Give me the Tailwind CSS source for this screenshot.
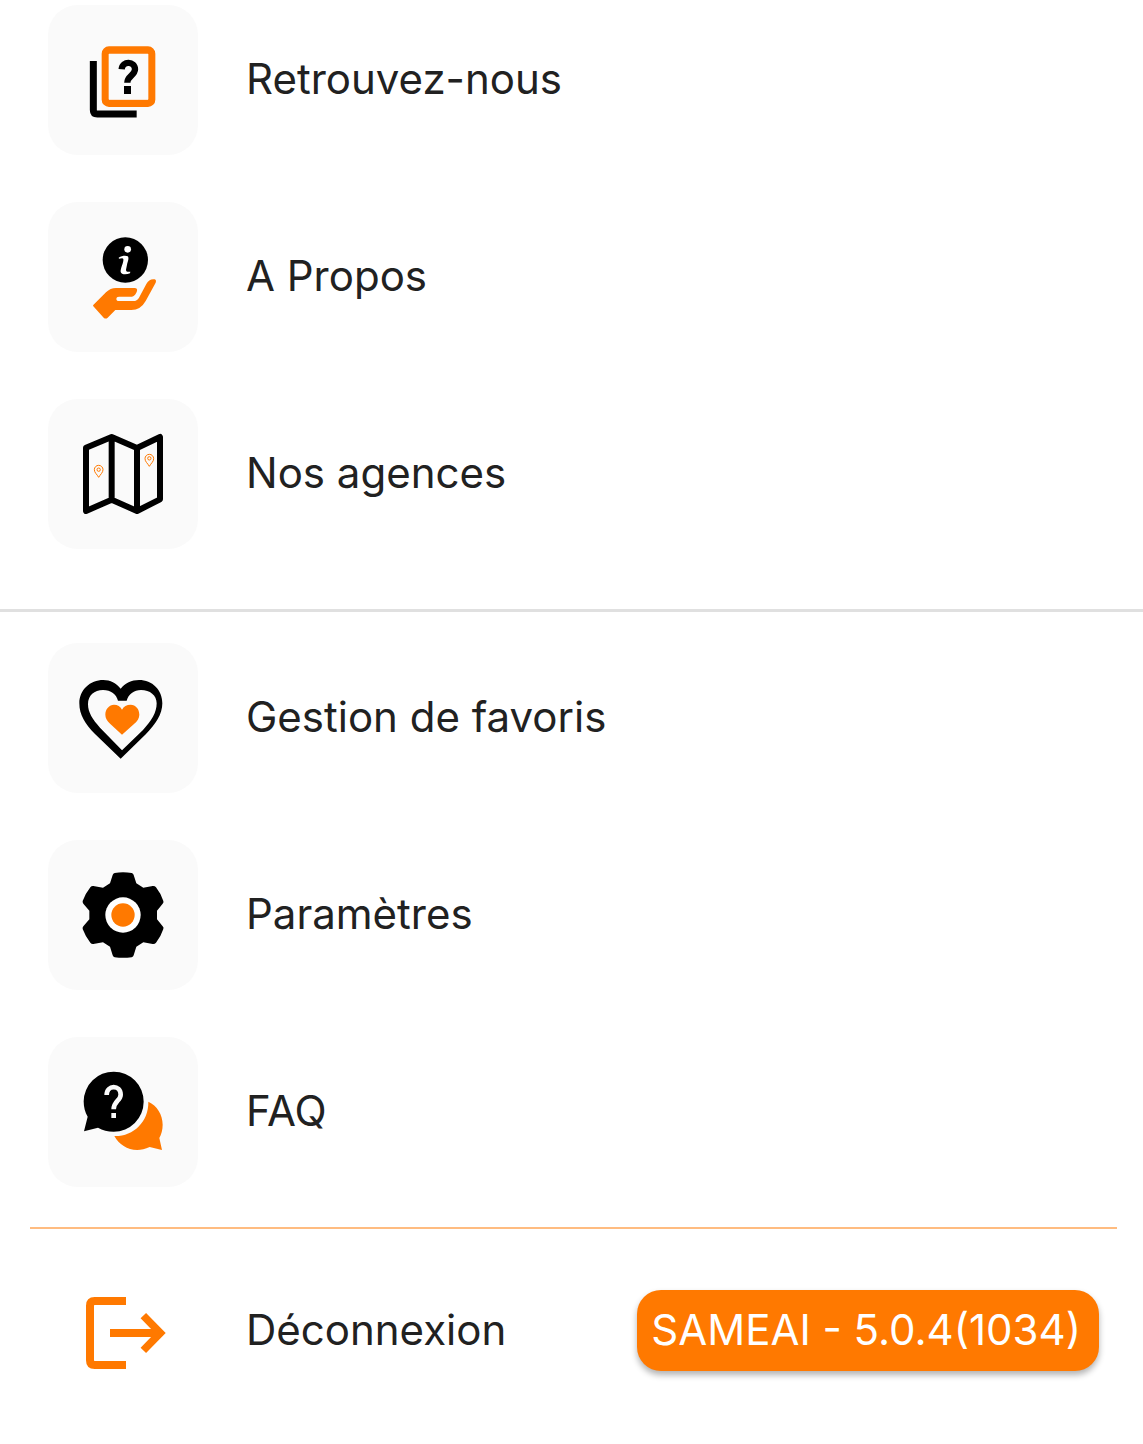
<!DOCTYPE html>
<html lang="fr">
<head>
<meta charset="utf-8">
<meta name="viewport" content="width=device-width, initial-scale=1">
<title>Menu</title>
<script src="https://cdn.jsdelivr.net/npm/@tailwindcss/browser@4"></script>
</head>
<body class="min-h-screen bg-white font-['Inter',sans-serif] text-[42px] leading-[50px] text-[#212121]">
<nav aria-label="Menu">
  <ul class="flex flex-col gap-[47px] pt-[5px] pb-[60px] pl-12">
    <li>
      <a href="#retrouvez-nous" class="flex items-center gap-12">
        <svg class="size-[150px] shrink-0 rounded-[30px] bg-[#fafafa]" viewBox="24 15 450 450" fill="none" aria-hidden="true">
          <path d="M160 183V330Q160 342 172 342H290" stroke="#000" stroke-width="21"/>
          <rect x="196" y="150" width="139" height="160" rx="11" stroke="#ff7900" stroke-width="22"/>
          <rect x="206" y="162" width="119" height="136" fill="#fafafa"/>
          <path d="M245 208C247 181 285 183 285 208C285 226 262 228 262 248" stroke="#000" stroke-width="19"/>
          <path d="M252 258h21v24h-21z" fill="#000"/>
        </svg>
        <span class="pb-0.5">Retrouvez-nous</span>
      </a>
    </li>
    <li>
      <a href="#a-propos" class="flex items-center gap-12">
        <svg class="size-[150px] shrink-0 rounded-[30px] bg-[#fafafa]" viewBox="24 21 450 450" fill="none" aria-hidden="true">
          <circle cx="256" cy="195" r="68" fill="#000"/>
          <circle cx="263" cy="163" r="10" fill="#fff"/>
          <path d="M236 188C246 182 257 181 263 184C268 188 264 199 261 209L258 224C258 231 264 231 271 230L270 235C260 239 244 240 242 231C240 222 252 201 250 192C249 188 243 190 237 191Z" fill="#fff"/>
          <path d="M159 331L198 292Q211 279 228 279H284Q293 279 291 288Q287 302 276 305H237Q229 305 229 311Q229 318 237 318H280Q291 318 297 308L319 267Q327 251 344 253Q350 255 347 263L317 318Q302 345 274 345H226L203 368Q197 373 191 368L160 334Z" fill="#ff7900"/>
        </svg>
        <span class="pb-0.5">A Propos</span>
      </a>
    </li>
    <li>
      <a href="#nos-agences" class="flex items-center gap-12">
        <svg class="size-[150px] shrink-0 rounded-[30px] bg-[#fafafa]" viewBox="24 21 450 450" fill="none" aria-hidden="true">
          <path d="M138 167L215 135L291 168L360 135V322L291 357L215 323L138 357ZM215 135V323M291 168V357" stroke="#000" stroke-width="18" stroke-linejoin="round"/>
          <g stroke="#ff7900" stroke-width="3">
            <path d="M176 256C171 247 163 242 163 233A13 13 0 0 1 189 233C189 242 181 247 176 256Z"/>
            <circle cx="176" cy="233" r="5"/>
            <path d="M328 223C323 214 315 209 315 200A13 13 0 0 1 341 200C341 209 333 214 328 223Z"/>
            <circle cx="328" cy="199" r="5"/>
          </g>
        </svg>
        <span class="pb-0.5">Nos agences</span>
      </a>
    </li>
  </ul>
  <hr class="border-t-[3px] border-[#e0e0e0]">
  <ul class="flex flex-col gap-[47px] pt-[31px] pb-10 pl-12">
    <li>
      <a href="#favoris" class="flex items-center gap-12">
        <svg class="size-[150px] shrink-0 rounded-[30px] bg-[#fafafa]" viewBox="24 24 450 450" fill="none" aria-hidden="true">
          <path fill-rule="evenodd" d="M242 371L165 297C135 267 118 239 118 205C118 165 150 135 190 135C211 135 229 144 242 161C255 144 275 135 297 135C337 135 367 165 367 205C367 238 347 268 318 297ZM246 346L309 285C334 258 350 233 350 205C350 181 330 165 303 165C282 165 265 178 260 197H234C229 178 213 165 189 165C163 165 144 181 144 207C144 233 158 253 180 278Z" fill="#000"/>
          <path d="M246 299L211 267C201 257 196 250 196 239C196 222 208 209 222 209C233 209 241 214 246 224C251 214 260 209 272 209C287 209 298 222 298 239C298 250 292 258 282 267Z" fill="#ff7900"/>
        </svg>
        <span class="pb-0.5">Gestion de favoris</span>
      </a>
    </li>
    <li>
      <a href="#parametres" class="flex items-center gap-12">
        <svg class="size-[150px] shrink-0 rounded-[30px] bg-[#fafafa]" viewBox="24 24 450 450" fill="none" aria-hidden="true">
          <path d="M224 123Q249 119 275 123Q280 124 281 129L289 154L310 167L338 162Q344 161 348 166Q363 185 370 207Q372 211 368 215L351 236V262L368 283Q372 287 370 291Q363 313 348 332Q344 337 338 336L310 331L289 344L281 370Q280 375 275 376Q249 379 224 376Q219 375 218 370L210 344L189 331L160 336Q155 337 151 332Q136 313 128 291Q127 287 130 283L148 262V236L130 215Q127 211 128 207Q136 185 151 166Q155 161 160 162L189 167L210 154L218 129Q219 124 224 123Z" fill="#000"/>
          <circle cx="249" cy="249" r="53" fill="#fff"/>
          <circle cx="249" cy="249" r="35" fill="#ff7900"/>
        </svg>
        <span class="pb-0.5">Paramètres</span>
      </a>
    </li>
    <li>
      <a href="#faq" class="flex items-center gap-12">
        <svg class="size-[150px] shrink-0 rounded-[30px] bg-[#fafafa]" viewBox="24 21 450 450" fill="none" aria-hidden="true">
          <path d="M132 304L143 260C135 247 131 231 131 214A90 90 0 1 1 221 305C203 305 188 301 174 293Z" fill="#000"/>
          <path d="M200 195C200 163 242 164 242 194C242 212 221 213 221 238" stroke="#fafafa" stroke-width="14"/>
          <path d="M214 249h14v15h-14z" fill="#fafafa"/>
          <path d="M325 215C351 226 368 254 368 284C368 300 364 313 358 324L366 360L329 351C284 372 242 353 223 318C278 320 326 277 325 215Z" fill="#ff7900"/>
        </svg>
        <span class="pb-0.5">FAQ</span>
      </a>
    </li>
  </ul>
  <hr class="mr-[26px] ml-[30px] border-t-2 border-[#ffbc80]">
  <div class="flex items-center justify-between pt-[61px] pr-11 pb-[73px] pl-12">
    <a href="#deconnexion" class="flex items-center gap-12">
      <svg class="h-[80px] w-[150px] shrink-0" viewBox="84 228 450 240" fill="none" aria-hidden="true">
        <path d="M318 258H224Q210 258 210 272V436Q210 450 224 450H318M270 354H414" stroke="#ff7900" stroke-width="24"/>
        <path d="M370 302L421 354L370 406" stroke="#ff7900" stroke-width="23"/>
      </svg>
      <span class="pb-0.5">Déconnexion</span>
    </a>
    <button type="button" class="h-[81px] rounded-3xl bg-[#ff7900] pr-[18px] pb-0.5 pl-[14px] text-white shadow-[0_4px_6px_rgba(0,0,0,0.3)]">SAMEAI - 5.0.4(1034)</button>
  </div>
</nav>
</body>
</html>
